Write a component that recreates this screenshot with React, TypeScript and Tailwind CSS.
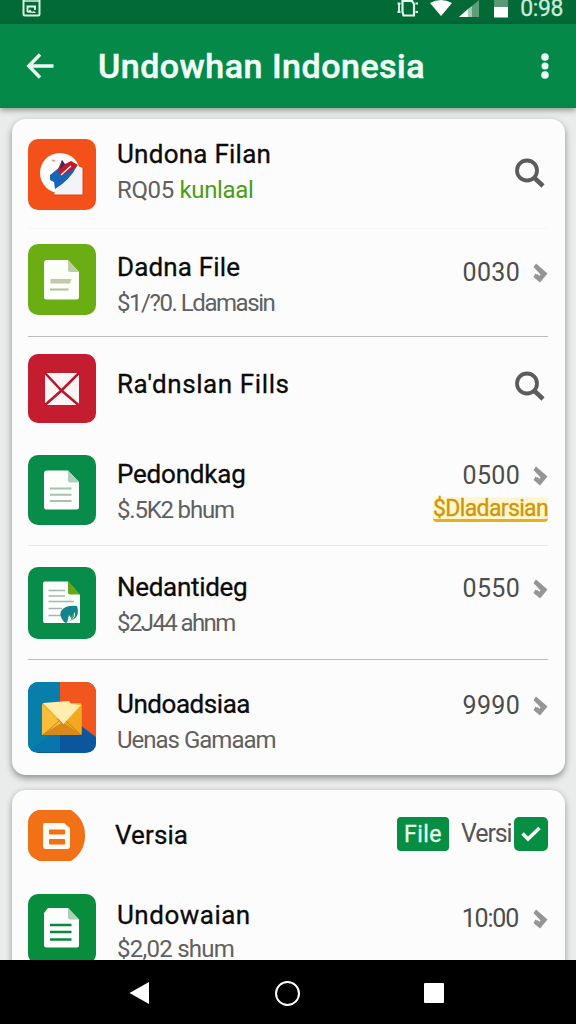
import React from "react";
import clsx from "clsx";

type Row = {
  title: string;
  titleClass: string;
  sub?: React.ReactNode;
  subClass?: string;
  rowClass: string;
  textClass: string;
  icon: React.ReactNode;
  side: React.ReactNode;
};

const Tile = ({ className, children }: { className: string; children: React.ReactNode }) => (
  <div className={clsx("w-[68px] shrink-0 overflow-hidden rounded-[10px]", className)}>
    <svg viewBox="0 0 68 70" className="block h-[70px] w-[68px]" fill="none">
      {children}
    </svg>
  </div>
);

const SearchIcon = ({ className }: { className: string }) => (
  <svg viewBox="0 0 32 32" className={clsx("mr-[2px] size-8", className)} fill="none" stroke="#5c5c5c">
    <circle cx="13" cy="13.500" r="10" strokeWidth="3.800" />
    <path d="M20 20.500L29 29" strokeWidth="4.500" />
  </svg>
);

const Chevron = () => (
  <svg viewBox="0 0 16 20" className="h-5 w-4" fill="#959595">
    <path d="M4 0.500L15.500 10.500L8 19.500L1.500 14L3.500 10.500L7 13.500L8.500 11.500L1.500 4Z" />
    <path d="M5 11.500L8.500 14.500" stroke="#959595" strokeWidth="1.500" />
  </svg>
);

const Amount = ({ value, className, valueClass = "tracking-[0.3px]" }: { value: string; className?: string; valueClass?: string }) => (
  <div className={clsx("flex items-center", className)}>
    <span className={clsx("text-[25px] leading-9 text-[#4c4c4c]", valueClass)}>{value}</span>
    <span className="ml-3"><Chevron /></span>
  </div>
);

const files: Row[] = [
  {
    title: "Undona Filan",
    titleClass: "tracking-[0.25px]",
    sub: <>RQ05 <span className="text-[#4a9e16]">kunlaal</span></>,
    subClass: "tracking-[-0.35px]",
    rowClass: "h-[110px] pt-5 border-[#f8f6f8]",
    textClass: "-mt-[3px]",
    icon: (
      <Tile className="h-[71px] bg-[#f4511a]">
        <circle cx="32" cy="34" r="20" fill="#fff" />
        <path d="M52 26L56 30V57H26V54Z" fill="#c73a12" opacity=".35" />
        <path d="M27 38L50 27L54.500 29V55.500H26.500Z" fill="#f3f4f8" />
        <path d="M22 36L32 28L49 27Q42 41 27 50L26 43L22 41Z" fill="#1765b8" />
        <path d="M32 37L30 30L34 21L37 25L43 22L50 26L43 32L34 36Z" fill="#c71925" />
        <path d="M34 21L32 30L37 26Z" fill="#25356d" />
        <path d="M33 36L43 27" stroke="#fff" strokeWidth="1.300" />
        <path d="M24 21L27 22" stroke="#f79876" strokeWidth="1.500" />
      </Tile>
    ),
    side: <SearchIcon className="mt-[18px]" />,
  },
  {
    title: "Dadna File",
    titleClass: "tracking-[0.15px]",
    sub: "$1/?0. Ldamasin",
    subClass: "tracking-[-1.45px]",
    rowClass: "h-[108px] pt-[15px] border-[#bdbdbd]",
    textClass: "mt-[5px]",
    icon: (
      <Tile className="h-[71px] bg-[#6aae14]">
        <path d="M19 16H40L51 28V53Q51 55.500 48.500 55.500H18.500Q16 55.500 16 53V19Q16 16 19 16Z" fill="#fdfff9" />
        <path d="M40 16L51 28H42Q40 28 40 26Z" fill="#bdcca9" />
        <path d="M22.500 35H43.500L42 39.500H22.500Z" fill="#c1c9ae" />
        <path d="M22 45.500H40.500" stroke="#b3bf9b" strokeWidth="2.200" />
      </Tile>
    ),
    side: <Amount value="0030" className="mt-[11px]" />,
  },
  {
    title: "Ra'dnslan Fills",
    titleClass: "tracking-[0.6px]",
    rowClass: "h-[103px] pt-[17px] border-transparent",
    textClass: "mt-3",
    icon: (
      <Tile className="h-[69px] bg-[#c41d30]">
        <path d="M17 19H51V51H17Z" fill="#fff5f5" />
        <path d="M17 19L33.500 36.500L50.500 51M51 19L33.500 36.500L17 51" stroke="#b5182b" strokeWidth="2.500" />
      </Tile>
    ),
    side: <SearchIcon className="mt-4" />,
  },
  {
    title: "Pedondkag",
    titleClass: "tracking-[-0.2px]",
    sub: "$.5K2 bhum",
    subClass: "tracking-[-1.2px]",
    rowClass: "h-[106px] pt-[15px] border-[#e7e7e7]",
    textClass: "mt-[1px]",
    icon: (
      <Tile className="h-[70px] bg-[#078c49]">
        <path d="M19 15.500H40L51 27V52Q51 54.500 48.500 54.500H18.500Q16 54.500 16 52V18.500Q16 15.500 19 15.500Z" fill="#fdfffd" />
        <path d="M40 15.500L51 27.500H42Q40 27.500 40 25.500Z" fill="#b3cdbd" />
        <path d="M22 33.500H43.500M22 39.800H43.500M22 46H43.500" stroke="#a6c2b2" strokeWidth="1.900" />
      </Tile>
    ),
    side: (
      <div className="mt-[3px] flex flex-col items-end">
        <Amount value="0500" />
        <span className="mt-[3px] h-[25px] rounded-[4px] border-b-[3px] border-[#e6b01c] bg-[#fff6d0] text-[23px] leading-[24px] tracking-[-0.65px] text-[#cb930b] [-webkit-text-stroke:0.4px_#d9a010]">
          $Dladarsian
        </span>
      </div>
    ),
  },
  {
    title: "Nedantideg",
    titleClass: "tracking-[-0.3px]",
    sub: "$2J44 ahnm",
    subClass: "tracking-[-1.6px]",
    rowClass: "h-[114px] pt-[21px] border-[#bdbdbd]",
    textClass: "mt-[2px]",
    icon: (
      <Tile className="h-[72px] bg-[#078c49]">
        <path d="M17 14.500H40L52 28V56H17Q15 56 15 54V16.500Q15 14.500 17 14.500Z" fill="#fbfffc" />
        <path d="M40 14L52 27.500H42Q40 27.500 40 25.500Z" fill="#68a716" />
        <path d="M20.500 23.500H37M20.500 29H37M20.500 34.500H46M20.500 41.500H34M20.500 48.500H33" stroke="#a9b7b1" strokeWidth="1.500" />
        <path d="M36 55Q31 49 33 44Q37 38 49 39Q52 48 46 52L38 56Z" fill="#16838b" />
        <path d="M39 56L41 48L43 51L47 45Q48 51 43 53Z" fill="#eafff4" />
        <path d="M43 51L46 46Q47 50 43 53Z" fill="#4ba52e" />
      </Tile>
    ),
    side: <Amount value="0550" className="mt-[4px]" />,
  },
  {
    title: "Undoadsiaa",
    titleClass: "tracking-[-0.45px]",
    sub: "Uenas Gamaam",
    subClass: "tracking-[-1px]",
    rowClass: "h-[115px] pt-[22px] border-transparent",
    textClass: "mt-[4px]",
    icon: (
      <Tile className="h-[71px] bg-[#0a5ca2]">
        <path d="M0 0H32V71H0Z" fill="#087fab" />
        <path d="M0 71L32 44V71Z" fill="#0876ad" />
        <path d="M32 0H68V55L48 40H32Z" fill="#f0561e" />
        <path d="M32 46L53 46L68 57V71H32Z" fill="#0b569c" />
        <rect x="14" y="21" width="39.500" height="32" rx="2" fill="#f5b32a" />
        <path d="M14 53L30 36L38 36L53.500 53Z" fill="#d8891b" />
        <path d="M14 23L33 41L14 53Z" fill="#f9bd3c" />
        <path d="M53.500 23L36 41L53.500 53Z" fill="#f2a91f" />
        <path d="M15 21L41 19L43 22L53 23L35.500 42Z" fill="#ffeeb0" />
        <path d="M15 53L31 39M53 53L38 39" stroke="#b97510" strokeWidth=".8" />
      </Tile>
    ),
    side: <Amount value="9990" className="mt-[6px]" />,
  },
];

const ListRow = ({ row }: { row: Row }) => (
  <div className={clsx("flex items-start border-b", row.rowClass)}>
    {row.icon}
    <div className={clsx("ml-[21px] flex-1 whitespace-nowrap", row.textClass)}>
      <p className={clsx("text-[26px] leading-9 text-[#0b0b0b] [-webkit-text-stroke:0.3px_#0b0b0b]", row.titleClass)}>{row.title}</p>
      {row.sub && <p className={clsx("text-[24px] leading-9 text-[#606060]", row.subClass)}>{row.sub}</p>}
    </div>
    {row.side}
  </div>
);

const StatusBar = () => (
  <div className="flex h-6 shrink-0 items-start bg-[#016a36] pl-[22px] pr-[13px] text-white">
    <svg viewBox="0 0 19 17" className="h-[17px] w-[19px]" fill="none">
      <path d="M1.500 0V14Q1.500 15.500 3 15.500H16Q17.500 15.500 17.500 14V0" stroke="#d6f5e3" strokeWidth="2" />
      <path d="M1 1H18" stroke="#d6f5e3" strokeWidth="1.500" />
      <path d="M5.500 12V6.500H13V10" stroke="#e6fff0" strokeWidth="1.800" />
      <path d="M5 12.500L8 9.500L10 12L12 11L14 13Z" fill="#fff" />
    </svg>
    <svg viewBox="0 0 112 18" className="ml-auto h-[18px] w-[112px]" fill="none">
      <path d="M6.500 1H16L18 4V15.500H7.500L6.500 12Z" stroke="#e2fbec" strokeWidth="2.200" />
      <path d="M1.500 3.500H4.500M3 4V11M1.500 12H4.500M19.500 3.500H22M19.500 12H22" stroke="#e2fbec" strokeWidth="1.800" />
      <path d="M34 3Q45 -3 56 3L45 16Z" fill="#fff" />
      <path d="M63 17L83 0V17Z" fill="#5d9d79" />
      <path d="M63 17L72 9V17Z" fill="#fff" />
      <path d="M72 9L76 6V17H72Z" fill="#a5cab4" />
      <path d="M98 0H112V7H98Z" fill="#5a9975" />
      <path d="M98 7H112V17.500H98Z" fill="#fff" />
    </svg>
    <span className="ml-3 text-[23px] leading-[17px] tracking-[-0.4px] text-[#c9ecd8] [-webkit-text-stroke:0.3px_#c9ecd8]">0:98</span>
  </div>
);

const Header = () => (
  <header className="relative z-10 flex h-[84px] shrink-0 items-center bg-[#058948] pl-[26px] pr-[26px] shadow-[0_2px_6px_rgba(0,0,0,0.4)]">
    <svg viewBox="0 0 28 26" className="h-[26px] w-7" fill="none" stroke="#eafff4" strokeWidth="3.400">
      <path d="M27.500 13H3M14 1.500L2.800 13L14 24.500" />
    </svg>
    <h1 className="ml-[44px] whitespace-nowrap text-[34px] font-medium leading-10 tracking-[0.5px] text-[#f0fff7] [-webkit-text-stroke:0.5px_#f0fff7]">Undowhan Indonesia</h1>
    <svg viewBox="0 0 10 26" className="ml-auto h-[26px] w-[10px]" fill="#eafff4">
      <circle cx="5" cy="4" r="3.800" />
      <circle cx="5" cy="13" r="3.500" />
      <circle cx="5" cy="22" r="3.800" />
    </svg>
  </header>
);

const NavBar = () => (
  <nav className="relative z-10 flex h-16 shrink-0 items-center bg-black pl-[129px]">
    <svg viewBox="0 0 20 24" className="mt-0.5 h-6 w-5" fill="#fff">
      <path d="M0.500 12L20 1V23Z" />
    </svg>
    <span className="ml-[126px] mt-0.5 size-[25px] rounded-full border-2 border-white" />
    <span className="ml-[124px] mt-0.5 size-5 rounded-[1px] bg-white" />
  </nav>
);

const App: React.FC = () => {
  return (
    <div className="flex h-[1024px] w-[576px] flex-col overflow-hidden bg-[#e9ecea] font-['Roboto','Liberation_Sans',sans-serif]">
      <StatusBar />
      <Header />
      <main className="min-h-0 flex-1 overflow-hidden pl-3 pr-[11px] pt-[11px]">
        <section className="h-[656px] rounded-[14px] bg-[#fdfcfd] pl-4 pr-[17px] shadow-[0_3px_7px_rgba(0,0,0,0.4)]">
          {files.map((row) => (
            <ListRow key={row.title} row={row} />
          ))}
        </section>

        <section className="mt-[15px] h-[200px] rounded-[14px] bg-[#fdfcfd] pl-4 pr-[17px] shadow-[0_2px_6px_rgba(0,0,0,0.35)]">
          <div className="flex h-[89px] items-start pt-5">
            <svg viewBox="0 0 57 51" className="h-[51px] w-[57px]" fill="none">
              <path d="M10 0H43Q57 9 57 25.500Q57 42 43 51H11Q0 46 0 39V11Q1 3 10 0Z" fill="#f27016" />
              <path d="M17 13H36L42 18V36Q42 39 39 39H18Q15 39 15 36V15Q15 13 17 13Z" fill="#fffaf2" />
              <rect x="21" y="19.500" width="16" height="5" rx="1" fill="#f27016" />
              <rect x="21" y="29" width="16" height="5.500" rx="1" fill="#f27016" />
            </svg>
            <p className="ml-[30px] mt-[7px] text-[26px] leading-9 tracking-[0.1px] text-[#0b0b0b] [-webkit-text-stroke:0.3px_#0b0b0b]">Versia</p>
            <div className="ml-auto mt-[6px] flex items-center">
              <span className="flex h-[34px] w-[52px] items-center justify-center rounded-[4px] bg-[#068f43] text-[23px] leading-none tracking-[0.5px] text-[#eafff2] [-webkit-text-stroke:0.3px_#eafff2]">
                File
              </span>
              <span className="ml-3 w-[53px] whitespace-nowrap text-[25px] leading-9 tracking-[-1.1px] text-[#555]">Versi</span>
              <span className="flex h-[34px] w-[34px] items-center justify-center rounded-[5px] bg-[#068f43]">
                <svg viewBox="0 0 20 16" className="h-4 w-5" fill="none" stroke="#f4fff8" strokeWidth="3.600">
                  <path d="M1.500 7.500L7 13L18.500 2" />
                </svg>
              </span>
            </div>
          </div>
          <div className="flex items-start pt-[15px]">
            <Tile className="h-[70px] bg-[#078d3c]">
              <path d="M20 14H40L51 25.500V51Q51 53.500 48.500 53.500H18.500Q16 53.500 16 51V19Z" fill="#fdfffd" />
              <path d="M40 14L51 25.500H42Q40 25.500 40 23.500Z" fill="#aed0b8" />
              <path d="M22 31H43.500M22 38H43.500M22 45.500H43.500" stroke="#0a8740" strokeWidth="2.600" />
            </Tile>
            <div className="ml-[21px] mt-[3px] flex-1 whitespace-nowrap">
              <p className="text-[26px] leading-9 tracking-[0.5px] text-[#0b0b0b] [-webkit-text-stroke:0.3px_#0b0b0b]">Undowaian</p>
              <p className="-mt-[2px] text-[24px] leading-9 tracking-[-0.75px] text-[#606060]">$2,02 shum</p>
            </div>
            <Amount value="10:00" className="mt-[7px]" valueClass="mr-[2px] tracking-[-1.2px]" />
          </div>
        </section>
      </main>
      <NavBar />
    </div>
  );
};

export default App;
